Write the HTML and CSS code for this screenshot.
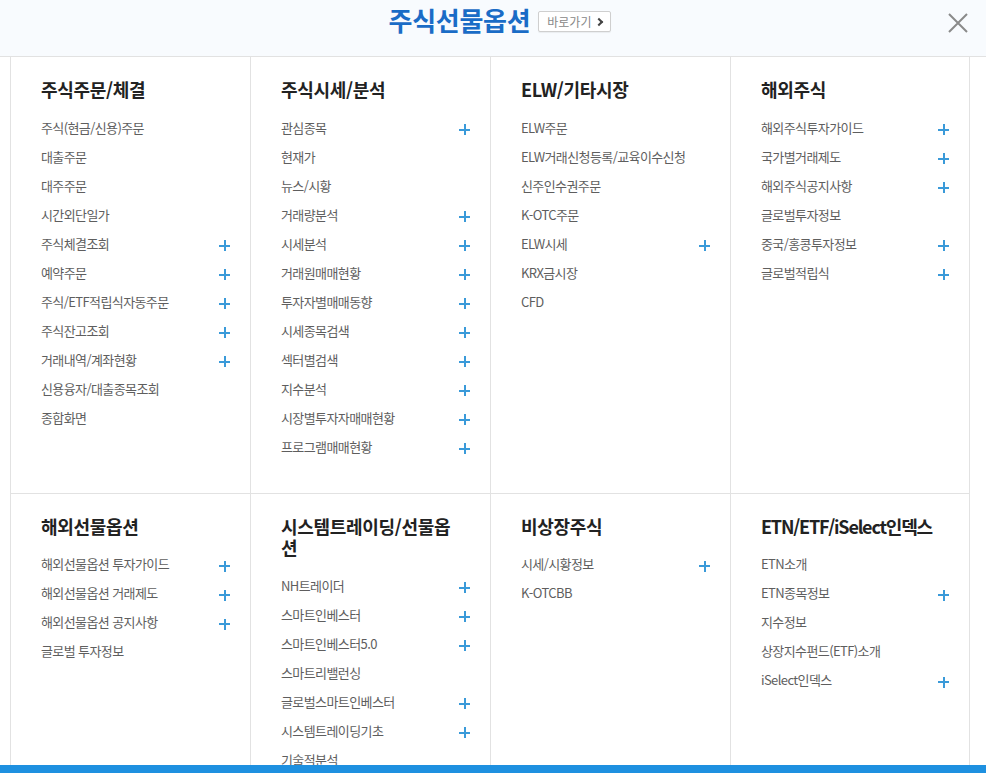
FILE: index.html
```html
<!DOCTYPE html>
<html lang="ko">

<head>
    <meta charset="UTF-8">
    <meta name="viewport" content="width=device-width, initial-scale=1.0">
    <title>주식선물옵션</title>

    <link rel="stylesheet" href="styles.css">

</head>

<body>
    <div id="header">
        <h1 id="mainTitle">주식선물옵션</h1>
        <a id="goBtn" href="#">바로가기<span class="chev"></span></a>
        <button id="closeBtn" type="button" aria-label="닫기">
            <svg width="20" height="20" viewBox="0 0 20 20">
                <path d="M1 1 L19 19 M19 1 L1 19" stroke="#8a8a8a" stroke-width="2" fill="none" />
            </svg>
        </button>
    </div>

    <div id="menuGrid">
        <!-- 1행 -->
        <div class="menuCol">
            <h2 class="colTitle">주식주문/체결</h2>
            <ul class="menuList">
                <li>주식(현금/신용)주문</li>
                <li>대출주문</li>
                <li>대주주문</li>
                <li>시간외단일가</li>
                <li class="sub">주식체결조회</li>
                <li class="sub">예약주문</li>
                <li class="sub">주식/ETF적립식자동주문</li>
                <li class="sub">주식잔고조회</li>
                <li class="sub">거래내역/계좌현황</li>
                <li>신용융자/대출종목조회</li>
                <li>종합화면</li>
            </ul>
        </div>
        <div class="menuCol">
            <h2 class="colTitle">주식시세/분석</h2>
            <ul class="menuList">
                <li class="sub">관심종목</li>
                <li>현재가</li>
                <li>뉴스/시황</li>
                <li class="sub">거래량분석</li>
                <li class="sub">시세분석</li>
                <li class="sub">거래원매매현황</li>
                <li class="sub">투자자별매매동향</li>
                <li class="sub">시세종목검색</li>
                <li class="sub">섹터별검색</li>
                <li class="sub">지수분석</li>
                <li class="sub">시장별투자자매매현황</li>
                <li class="sub">프로그램매매현황</li>
            </ul>
        </div>
        <div class="menuCol">
            <h2 class="colTitle">ELW/기타시장</h2>
            <ul class="menuList">
                <li>ELW주문</li>
                <li>ELW거래신청등록/교육이수신청</li>
                <li>신주인수권주문</li>
                <li>K-OTC주문</li>
                <li class="sub">ELW시세</li>
                <li>KRX금시장</li>
                <li>CFD</li>
            </ul>
        </div>
        <div class="menuCol">
            <h2 class="colTitle">해외주식</h2>
            <ul class="menuList">
                <li class="sub">해외주식투자가이드</li>
                <li class="sub">국가별거래제도</li>
                <li class="sub">해외주식공지사항</li>
                <li>글로벌투자정보</li>
                <li class="sub">중국/홍콩투자정보</li>
                <li class="sub">글로벌적립식</li>
            </ul>
        </div>

        <!-- 2행 -->
        <div class="menuCol">
            <h2 class="colTitle">해외선물옵션</h2>
            <ul class="menuList">
                <li class="sub">해외선물옵션 투자가이드</li>
                <li class="sub">해외선물옵션 거래제도</li>
                <li class="sub">해외선물옵션 공지사항</li>
                <li>글로벌 투자정보</li>
            </ul>
        </div>
        <div class="menuCol">
            <h2 class="colTitle">시스템트레이딩/선물옵션</h2>
            <ul class="menuList">
                <li class="sub">NH트레이더</li>
                <li class="sub">스마트인베스터</li>
                <li class="sub">스마트인베스터5.0</li>
                <li>스마트리밸런싱</li>
                <li class="sub">글로벌스마트인베스터</li>
                <li class="sub">시스템트레이딩기초</li>
                <li>기술적분석</li>
            </ul>
        </div>
        <div class="menuCol">
            <h2 class="colTitle">비상장주식</h2>
            <ul class="menuList">
                <li class="sub">시세/시황정보</li>
                <li>K-OTCBB</li>
            </ul>
        </div>
        <div class="menuCol">
            <h2 class="colTitle tight">ETN/ETF/iSelect인덱스</h2>
            <ul class="menuList">
                <li>ETN소개</li>
                <li class="sub">ETN종목정보</li>
                <li>지수정보</li>
                <li>상장지수펀드(ETF)소개</li>
                <li class="sub">iSelect인덱스</li>
            </ul>
        </div>
    </div>

    <div id="bottomBar">
        <span class="barIcon"></span>전체메뉴 닫기
    </div>

</body>

</html>
```

FILE: styles.css
```css
body {
    margin: 0;
    background-color: white;
    font-family: "Noto Sans CJK KR", "Noto Sans", sans-serif;
    overflow: hidden;
}

/* header */
#header {
    position: relative;
    height: 56px;
    background-color: #f8fbfe;
    border-bottom: 1px solid #e2e2e2;
    display: flex;
    justify-content: center;
    align-items: flex-start;
    gap: 8px;
    padding-left: 14px;
}

#mainTitle {
    margin: 0;
    margin-top: 2px;
    font-size: 26px;
    line-height: 36px;
    font-weight: bold;
    letter-spacing: -0.3px;
    color: #1a6cc6;
}

#goBtn {
    margin-top: 11px;
    height: 19px;
    padding: 0 8px 0 8px;
    display: flex;
    align-items: center;
    gap: 5px;
    font-size: 12px;
    color: #888;
    text-decoration: none;
    background-color: white;
    border: 1px solid #cfcfcf;
    border-radius: 2px;
    box-shadow: 0 1px 1px rgba(0, 0, 0, 0.06);
}

.chev {
    width: 4px;
    height: 4px;
    border-top: 2px solid #444;
    border-right: 2px solid #444;
    transform: rotate(45deg);
}

#closeBtn {
    position: absolute;
    top: 13px;
    right: 18px;
    padding: 0;
    border: none;
    background: none;
    cursor: pointer;
}

/* menu */
#menuGrid {
    margin-left: 10px;
    display: grid;
    grid-template-columns: repeat(4, 240px);
}

.menuCol {
    box-sizing: border-box;
    border-left: 1px solid #e2e2e2;
    padding: 22px 20px 32px 30px;
}

.menuCol:nth-child(4n) {
    border-right: 1px solid #e2e2e2;
}

.menuCol:nth-child(n+5) {
    border-top: 1px solid #e2e2e2;
}

.colTitle {
    margin: 0;
    margin-bottom: 12px;
    max-width: 180px;
    font-size: 18px;
    line-height: 21.5px;
    font-weight: bold;
    letter-spacing: -0.3px;
    color: #222;
}

.colTitle.tight {
    letter-spacing: -1.2px;
}

.menuList {
    margin: 0;
    padding: 0;
    list-style: none;
}

.menuList li {
    position: relative;
    height: 29px;
    line-height: 29px;
    font-size: 13px;
    letter-spacing: -0.6px;
    color: #5e5e5e;
    cursor: pointer;
}

/* 하위메뉴 있는 항목 + 표시 */
.menuList li.sub::before,
.menuList li.sub::after {
    content: "";
    position: absolute;
    background-color: #3a9ad9;
}

.menuList li.sub::before {
    right: 0;
    top: 16px;
    width: 11px;
    height: 2px;
}

.menuList li.sub::after {
    right: 4.5px;
    top: 11.5px;
    width: 2px;
    height: 11px;
}

/* bottom bar */
#bottomBar {
    position: fixed;
    left: 0;
    right: 0;
    bottom: -32px;
    height: 40px;
    background-color: #1e90e0;
    color: white;
    font-size: 13px;
    display: flex;
    justify-content: center;
    align-items: center;
    gap: 6px;
}

.barIcon {
    width: 11px;
    height: 11px;
    border: 1.5px solid white;
    border-radius: 50%;
}
```
